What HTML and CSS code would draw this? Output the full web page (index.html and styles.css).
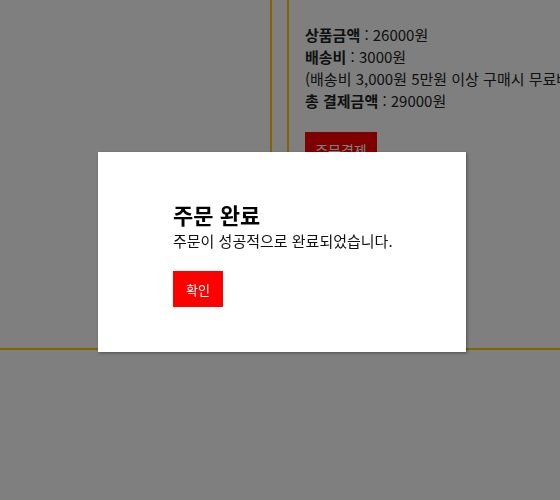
FILE: index.html
```html
<!DOCTYPE html>
<html lang="ko">
<head>
<meta charset="utf-8">
<link rel="stylesheet" href="styles.css">
</head>
<body>
<div class="page">
  <div class="col-left"></div>
  <div class="col-right">
    <div class="summary">
      <p><b>상품금액</b> : 26000원</p>
      <p><b>배송비</b> : 3000원</p>
      <p>(배송비 3,000원 5만원 이상 구매시 무료배송)</p>
      <p><b>총 결제금액</b> : 29000원</p>
    </div>
    <button class="pay-btn">주문결제</button>
  </div>
</div>
<div class="overlay">
  <div class="modal">
    <h2 class="modal-title">주문 완료</h2>
    <p class="modal-text">주문이 성공적으로 완료되었습니다.</p>
    <button class="ok-btn">확인</button>
  </div>
</div>
</body>
</html>
```
FILE: styles.css
```css
html, body {
  margin: 0;
  padding: 0;
  width: 560px;
  height: 500px;
  overflow: hidden;
  background: #fff;
  font-family: "Noto Sans CJK KR", "Noto Sans", sans-serif;
  color: #222;
}
.page {
  display: flex;
  width: 900px;
  height: 350px;
}
.col-left {
  width: 272px;
  height: 350px;
  box-sizing: border-box;
  border-right: 2px solid #ffcc00;
  border-bottom: 2px solid #ffcc00;
  flex: none;
}
.col-right {
  margin-left: 15px;
  flex: 1;
  height: 350px;
  box-sizing: border-box;
  border-left: 2px solid #ffcc00;
  border-bottom: 2px solid #ffcc00;
  padding: 24px 16px 0;
}
.summary p {
  margin: 0;
  font-size: 15px;
  line-height: 22px;
  white-space: nowrap;
}
.pay-btn {
  margin-top: 20px;
  width: 72px;
  height: 36px;
  border: 0;
  background: #ff0000;
  color: #fff;
  font-family: inherit;
  font-size: 14px;
}
.overlay {
  position: fixed;
  inset: 0;
  background: rgba(0, 0, 0, 0.5);
  display: flex;
  align-items: center;
  justify-content: center;
  padding: 4px 0 0 4px;
}
.modal {
  width: 368px;
  height: 200px;
  box-sizing: border-box;
  background: #fff;
  box-shadow: 1px 1px 3px rgba(0, 0, 0, 0.4);
  padding: 48px 30px 48px 75px;
}
.modal-title {
  margin: 0;
  font-size: 22px;
  line-height: 28px;
  font-weight: 700;
  color: #000;
}
.modal-text {
  margin: 2px 0 0;
  font-size: 15px;
  line-height: 22px;
  color: #111;
  white-space: nowrap;
}
.ok-btn {
  margin-top: 19px;
  width: 50px;
  height: 36px;
  border: 0;
  background: #ff0000;
  color: #fff;
  font-family: inherit;
  font-size: 13px;
  padding: 0;
}
```
